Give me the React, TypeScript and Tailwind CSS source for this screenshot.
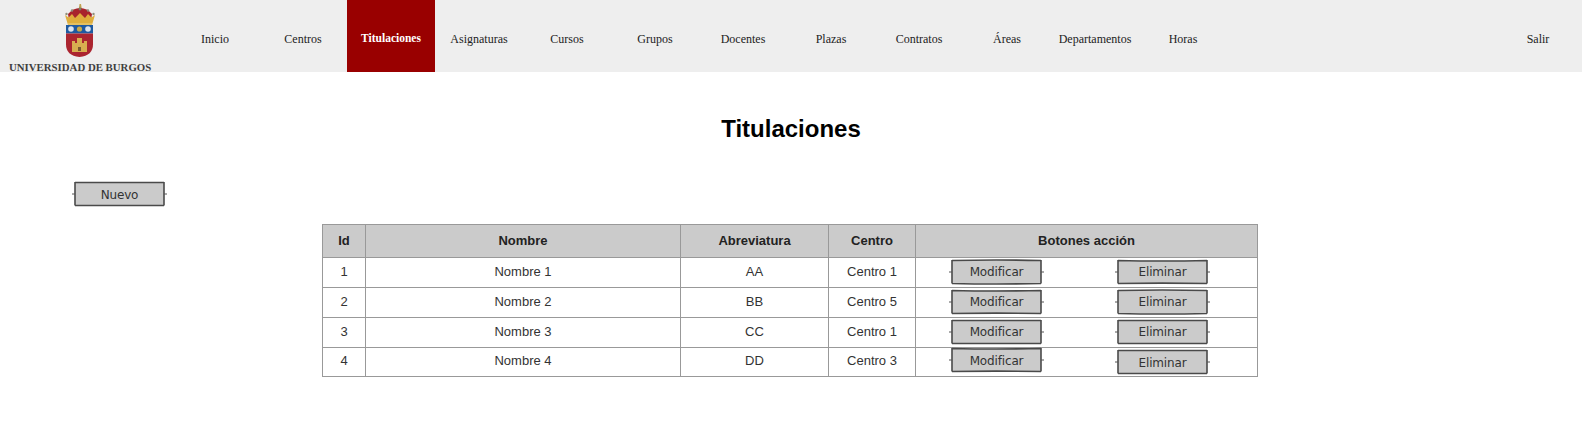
const items = ["Inicio","Centros","Titulaciones","Asignaturas","Cursos","Grupos","Docentes","Plazas","Contratos","Áreas","Departamentos","Horas"];
const rows = [
  { c: ["1","Nombre 1","AA","Centro 1"], m: "translate-y-[-1px]", e: "translate-y-[-1px]", mv: 0, ev: 1, h: "h-[30px]" },
  { c: ["2","Nombre 2","BB","Centro 5"], m: "translate-y-[-1px]", e: "translate-y-[-1px]", mv: 1, ev: 0, h: "h-[30px]" },
  { c: ["3","Nombre 3","CC","Centro 1"], m: "translate-y-[-1px]", e: "translate-y-[-1px]", mv: 2, ev: 2, h: "h-[30px]" },
  { c: ["4","Nombre 4","DD","Centro 3"], m: "translate-y-[-2px]", e: "translate-y-[0px]", mv: 1, ev: 2, h: "h-[29px]" },
];

function Logo() {
  return (
    <div className="w-[171px] h-[72px] shrink-0 relative pl-[64px] pt-[4px]">
      <svg width="32" height="54" viewBox="0 0 32 54" className="blur-[0.6px]">
        <path d="M15.5 0l1.5 0 .8 5h-3z" fill="#c2a14e" />
        <path d="M4 10q5-6 12-6t12 6l-1 6H5z" fill="#a8242c" />
        <circle cx="2.5" cy="10" r="1.2" fill="#8f8f7a" />
        <circle cx="8" cy="6.5" r="1.2" fill="#8f8f7a" />
        <circle cx="16" cy="5" r="1.4" fill="#7a7f6a" />
        <circle cx="24" cy="6.5" r="1.2" fill="#8f8f7a" />
        <circle cx="29.5" cy="10" r="1.2" fill="#8f8f7a" />
        <path d="M1 11l3.5 2.5L8 10l3 4 5-5 5 5 3-4 3.5 3.5L31 11l-3 10H4z" fill="#dfae3c" />
        <rect x="4" y="19" width="24" height="2" fill="#e4c060" />
        <rect x="2" y="21" width="27" height="8.5" fill="#1f5aa0" />
        <circle cx="7" cy="25" r="2.8" fill="#dce4ee" />
        <circle cx="15.5" cy="25" r="2.6" fill="#c9a94a" />
        <circle cx="24" cy="25" r="2.8" fill="#dce4ee" />
        <path d="M2 29.5h27v11q0 11-13.5 12.5Q2 51.5 2 40.5z" fill="#ab2530" />
        <path d="M8 48V37h3v2h2v-5h5v5h2v-2h3v11z" fill="#d8ae50" />
        <rect x="14" y="43" width="3" height="4" fill="#7a5a30" />
      </svg>
      <span className="absolute left-[9px] top-[61px] text-[10.8px] leading-[12px] font-bold whitespace-nowrap text-[#3f3f3f] font-['Liberation_Serif',serif]">UNIVERSIDAD DE BURGOS</span>
    </div>
  );
}

const outlines = [
  "M1 1.5Q45 0.5 90 1.5M1 1V24.5M90 1V24.5M1 24.5Q45 25.5 90 24.5",
  "M1 1.5Q45 2.5 90 1.5M1 1V24.5M90 1V24.5M1 24.5Q45 23.8 90 24.5",
  "M1 1.5H90M1 1V24.5M90 1V24.5M1 24.5H90",
];

function Sketch({ label, className, v }: { label: string; className: string; v: number }) {
  return (
    <span className={"relative inline-flex items-center justify-center w-[91px] h-[26px] text-[12px] text-[#333] font-['DejaVu_Sans',sans-serif] " + className}>
      <svg width="95" height="26" viewBox="-2 0 95 26" className="absolute left-[-2px] top-0" fill="none">
        <rect x="1" y="1.5" width="89" height="23" fill="#cbcbcb" />
        <path d={outlines[v]} stroke="#4a4a4a" strokeWidth="1.6" />
        <path d="M-2 13H1M90 13H93" stroke="#555" strokeWidth="1" />
      </svg>
      <span className="relative tracking-[-0.15px] pt-[1px]">{label}</span>
    </span>
  );
}

export default function App() {
  return (
    <div className="w-[1582px] h-[429px] bg-white overflow-hidden font-['Liberation_Sans',Arial,sans-serif]">
      <header className="h-[72px] bg-[#eeeeee] flex items-stretch font-['Liberation_Serif',serif] text-[12px] text-[#222]">
        <Logo />
        <nav className="flex flex-1 justify-between">
          <div className="flex">
            {items.map((t) => (
              <a key={t} className={"w-[88px] flex items-center justify-center whitespace-nowrap pt-[6px] " + (t === "Titulaciones" ? "bg-[#990000] text-white font-bold text-[11.5px]" : "")}>{t}</a>
            ))}
          </div>
          <a className="w-[88px] flex items-center justify-center pt-[6px]">Salir</a>
        </nav>
      </header>
      <h1 className="text-center text-[24px] leading-[28px] font-bold text-black mt-[43px]">Titulaciones</h1>
      <div className="pl-[74px] mt-[38px]">
        <Sketch label="Nuevo" className="" v={2} />
      </div>
      <div className="flex pl-[322px] mt-[17px]">
        <table className="border-collapse table-fixed w-[936px] text-[13px] text-[#333] text-center">
          <colgroup>
            <col className="w-[43px]" />
            <col className="w-[315px]" />
            <col className="w-[148px]" />
            <col className="w-[87px]" />
            <col />
          </colgroup>
          <thead>
            <tr className="h-[33px] bg-[#cbcbcb]">
              {["Id","Nombre","Abreviatura","Centro","Botones acción"].map((h) => (
                <th key={h} className="border border-[#999] font-bold text-[#222] pb-[1px]">{h}</th>
              ))}
            </tr>
          </thead>
          <tbody>
            {rows.map((r) => (
              <tr key={r.c[0]} className={r.h}>
                {r.c.map((c, i) => (
                  <td key={i} className="border border-[#999] p-0 pb-[2px]">{c}</td>
                ))}
                <td className="border border-[#999] p-0">
                  <div className="flex gap-[75px] pl-[35px] items-center h-[26px]">
                    <Sketch label="Modificar" className={r.m} v={r.mv} />
                    <Sketch label="Eliminar" className={r.e} v={r.ev} />
                  </div>
                </td>
              </tr>
            ))}
          </tbody>
        </table>
      </div>
    </div>
  );
}
